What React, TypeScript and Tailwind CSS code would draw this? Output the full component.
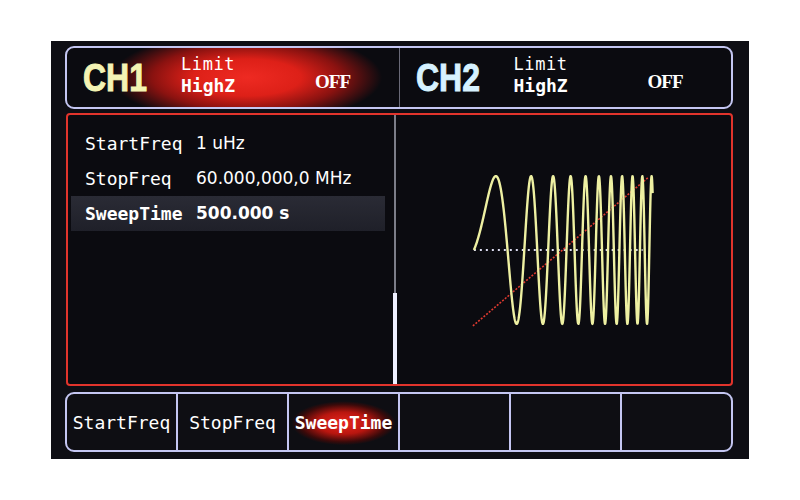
import React from "react";

const mono = { fontFamily: '"DejaVu Sans Mono", "Liberation Mono", monospace' };

function wavePath() {
  const a = 0.00484;
  const b = 0.0002963;
  const pts: string[] = [];
  for (let u = 0; u <= 179; u += 0.25) {
    const c = a * u + b * u * u;
    const y = 250 - 74 * Math.sin(2 * Math.PI * c);
    pts.push(`${(473 + u).toFixed(2)},${y.toFixed(2)}`);
  }
  return "M" + pts.join(" L");
}

function Wave() {
  return (
    <svg width="334" height="269" viewBox="397 115 334 269" className="block">
      <line x1="473" y1="250" x2="642" y2="250" stroke="#dcdcf0" strokeWidth="2" strokeDasharray="2 4" />
      <line x1="472" y1="326" x2="648" y2="177" stroke="#e03a30" strokeWidth="1.6" strokeDasharray="2 1.5" />
      <path d={wavePath()} fill="none" stroke="#eef0a2" strokeWidth="2.4" strokeLinejoin="round" />
    </svg>
  );
}

function ChannelHead({ name, color, glow }: { name: string; color: string; glow?: boolean }) {
  return (
    <div
      className={
        "flex-1 flex items-center pl-[16px] " +
        (glow
          ? "bg-[radial-gradient(ellipse_135px_46px_at_180px_50%,#ee2a22_0%,#dd2018_40%,#8a1210_70%,transparent_100%)]"
          : "")
      }
    >
      <div className="w-[98px] flex items-center">
        <span
          className="inline-block origin-left scale-x-[0.82] font-bold text-[39px] leading-none [-webkit-text-stroke:1px_currentColor]"
          style={{ fontFamily: '"Liberation Sans", Arial, sans-serif', color }}
        >
          {name}
        </span>
      </div>
      <div className="w-[134px] flex flex-col text-white leading-none" style={mono}>
        <span className="text-[17px] mt-[-5px] tracking-[0.6px]">Limit</span>
        <span className="text-[18px] font-bold mt-[4px]">HighZ</span>
      </div>
      <span
        className="text-white font-bold text-[19px] leading-none mt-[8px] tracking-[-1px]"
        style={{ fontFamily: '"Liberation Serif", "Times New Roman", serif' }}
      >
        OFF
      </span>
    </div>
  );
}

function Row({ label, value, bold, sel }: { label: string; value: string; bold?: boolean; sel?: boolean }) {
  return (
    <div
      className={
        "h-[35px] flex items-center pl-[14px] text-white " +
        (sel ? "bg-[linear-gradient(180deg,#2a2b35_0%,#1f2029_100%)]" : "")
      }
    >
      <span className={"w-[111px] text-[18px] " + (bold ? "font-bold" : "")} style={mono}>
        {label}
      </span>
      <span
        className={"text-[17px] " + (bold ? "font-bold" : "")}
        style={{ fontFamily: '"DejaVu Sans", Verdana, sans-serif' }}
      >
        {value}
      </span>
    </div>
  );
}

function SoftKey({ label, active, last }: { label?: string; active?: boolean; last?: boolean }) {
  return (
    <div
      className={
        "flex-1 flex items-center justify-center text-white text-[18px] " +
        (last ? "" : "border-r-2 border-[#c4c6f2] ") +
        (active
          ? "font-bold bg-[radial-gradient(ellipse_52px_22px_at_50%_52%,#e8261e_0%,#b8160f_50%,#3a0a0a_85%,transparent_100%)]"
          : "")
      }
      style={mono}
    >
      {label}
    </div>
  );
}

export default function App() {
  return (
    <div className="w-[800px] h-[500px] bg-white pt-[41px] pl-[51px]">
      <div className="w-[698px] h-[418px] bg-[#0e0e14] flex flex-col pl-[14px] pt-[5px]">
        {/* top bar */}
        <div className="w-[668px] h-[63px] rounded-[9px] border-2 border-[#c4c6f2] bg-[#0b0b10] flex overflow-hidden">
          <ChannelHead name="CH1" color="#f4f4b4" glow />
          <div className="w-[1px] bg-[#6a6a78]" />
          <ChannelHead name="CH2" color="#d6f2ff" />
        </div>
        {/* main */}
        <div className="ml-[1px] mt-[4px] w-[667px] h-[273px] rounded-[4px] border-2 border-[#e2342c] bg-[#0b0b10] flex">
          <div className="w-[325px] flex flex-col pt-[11px] pl-[3px] pr-[8px]">
            <Row label="StartFreq" value="1 uHz" />
            <Row label="StopFreq" value="60.000,000,0 MHz" />
            <Row label="SweepTime" value="500.000 s" bold sel />
          </div>
          <div className="w-[5px] flex flex-col items-center">
            <div className="w-[2px] flex-1 bg-[#7c7d88]" />
            <div className="w-[4px] h-[91px] bg-[#eef0ff]" />
          </div>
          <Wave />
        </div>
        {/* soft keys */}
        <div className="mt-[6px] w-[668px] h-[60px] rounded-[9px] border-2 border-[#c4c6f2] bg-[#0e0e13] flex overflow-hidden">
          <SoftKey label="StartFreq" />
          <SoftKey label="StopFreq" />
          <SoftKey label="SweepTime" active />
          <SoftKey />
          <SoftKey />
          <SoftKey last />
        </div>
      </div>
    </div>
  );
}
